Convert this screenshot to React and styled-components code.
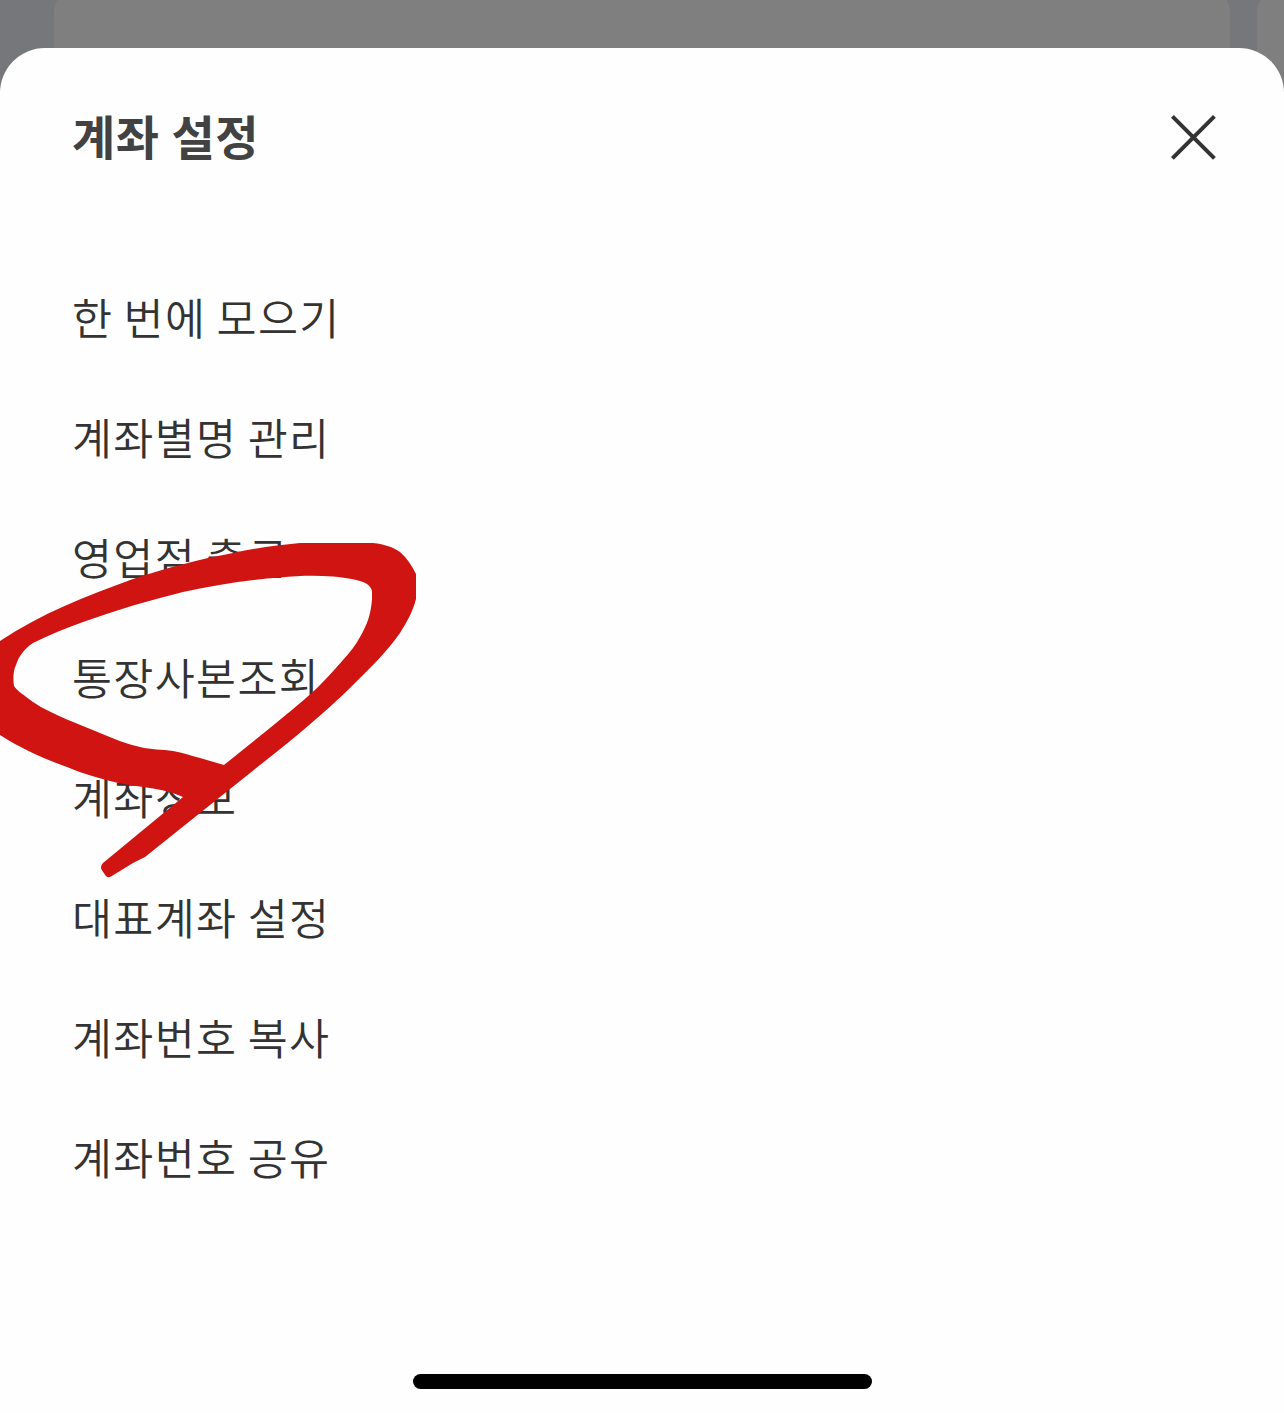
import styled, { createGlobalStyle } from "styled-components";

const GlobalStyle = createGlobalStyle`
* {
  box-sizing : border-box;
}

body {
  margin : 0;
  background-color : #7f7f7f;
  font-family : "Noto Sans CJK KR", "Noto Sans", sans-serif;
}
`

const Screen = styled.div`
position : relative;
width : 1284px;
height : 1413px;
overflow : hidden;
display : grid;
background-color : #76777b;
`

const Backdrop = styled.div`
grid-area : 1 / 1;
display : flex;
gap : 27px;
height : 140px;
padding-left : 54px;
overflow : hidden;
`

const BackdropCard = styled.div`
flex : 0 0 1176px;
margin-top : -12px;
border-radius : 24px;
background-color : #7f7f7f;
`

const Sheet = styled.section`
grid-area : 1 / 1;
display : flex;
flex-direction : column;
margin-top : 48px;
border-radius : 45px 45px 0 0;
background-color : #fefefe;
`

const SheetHeader = styled.header`
display : flex;
justify-content : space-between;
align-items : center;
height : 180px;
padding : 0 67px 0 72px;
`

const Title = styled.h1`
margin : 0;
padding-bottom : 6px;
font-size : 47px;
font-weight : 700;
line-height : 72px;
letter-spacing : 0.45px;
word-spacing : 1px;
color : #424242;
`

const CloseButton = styled.button`
display : flex;
padding : 0 0 2px;
border : none;
background : none;
cursor : pointer;
`

const Menu = styled.ul`
flex : 1;
margin : 0;
padding : 29px 72px 0;
list-style : none;
`

const MenuItem = styled.li`
height : 120px;
font-size : 43.5px;
font-weight : 350;
line-height : 120px;
letter-spacing : 1.35px;
word-spacing : -0.8px;
color : #333333;
`

const HomeIndicator = styled.div`
align-self : center;
width : 459px;
height : 15px;
margin : 0 0 24px 1px;
border-radius : 8px;
background-color : #000000;
`

const PenMark = styled.svg`
position : absolute;
top : 0;
left : 0;
pointer-events : none;
`

const menuItems = [
  "한 번에 모으기",
  "계좌별명 관리",
  "영업점 출금",
  "통장사본조회",
  "계좌정보",
  "대표계좌 설정",
  "계좌번호 복사",
  "계좌번호 공유",
];

function App () {
  return (
    <>
      <GlobalStyle />
      <Screen>
        <Backdrop>
          <BackdropCard />
          <BackdropCard />
        </Backdrop>
        <Sheet>
          <SheetHeader>
            <Title>계좌 설정</Title>
            <CloseButton aria-label="닫기">
              <svg width="47" height="46" viewBox="0 0 47 46" fill="none" stroke="#333333" strokeWidth="4">
                <path d="M2.4 2.4L44.4 44.4M44.4 2.4L2.4 44.4" />
              </svg>
            </CloseButton>
          </SheetHeader>
          <Menu>
            {menuItems.map((item) => (
              <MenuItem key={item}>{item}</MenuItem>
            ))}
          </Menu>
          <HomeIndicator />
        </Sheet>
        {/* red pen circle around 통장사본조회 */}
        <PenMark width="416" height="900" viewBox="0 0 416 900">
          <path
            fill="#cf1411"
            fillRule="evenodd"
            d="M0 641C42 613 86 596 133 579C166 568 200 559 233 553C256 548 278 545 300 543H373C385 544.5 393 547 400 552C407 558 412 566 416 574V599C413 611 407 622 400 633C387 652 368 670 350 688C322 715 292 740 260 765L200 813L145 857L133 863L111 876.5Q107.500 878.500 105.500 875.500L101.500 869.500Q100 866 103 863L183 797C170 791 157 789 143 787C132 785 121 784 110 781C95 777 81 773 67 767C44 759 22 749 0 735Z
            M372 599V592C372 589 370 586 367 584C360 580 348 578 333 576.500C316 575 298 575.500 280 577.500C247 580 215 585 183 592C150 600 116 610 83 622C66 628 49 635 33 643C24 649 19 656 16 665C13 671 13 680 14 686C16 690 25 696 33 702C43 709 55 714 67 719.500C78 724 89 728.500 100 733C114 739 127 744 140 747C151 750 162 749 173 751C183 753 191 755.500 200 758L224 765L260 736C281 719 301 703 317 688C328 677 337 667 343 660C350 652 356 645 360 637C367 625 371 614 372 599Z"
          />
        </PenMark>
      </Screen>
    </>
  );
}
export default App;
